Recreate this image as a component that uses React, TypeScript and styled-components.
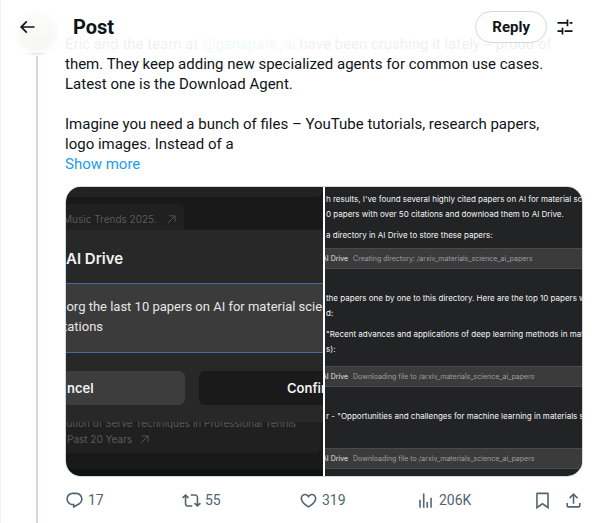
import React from "react";
import styled, { createGlobalStyle } from "styled-components";

const GlobalStyle = createGlobalStyle`
  * { box-sizing: border-box; }
  body {
    margin: 0;
    background: #fff;
    color: #0f1419;
    font-family: Roboto, "Liberation Sans", sans-serif;
    font-size: 15px;
    line-height: 20px;
  }
  button { font: inherit; color: inherit; background: none; border: 0; padding: 0; cursor: pointer; }
`;

const Column = styled.main`
  position: relative;
  border-left: 1px solid #eff3f4;
`;

const Header = styled.header`
  position: absolute;
  inset: 0 0 auto 0;
  z-index: 2;
  height: 53px;
  display: flex;
  align-items: center;
  gap: 8px;
  padding: 0 24px 0 16px;
  background: linear-gradient(rgba(255, 255, 255, 0.97) 30%, rgba(255, 255, 255, 0.92));
`;

const Title = styled.h1`
  flex: 1;
  margin: 0 0 0 28px;
  font-size: 20px;
  line-height: 24px;
  font-weight: 700;
`;

const IconButton = styled.button`
  display: flex;
`;

const ReplyButton = styled.button`
  height: 32px;
  padding: 0 16px;
  border: 1px solid #cfd9de;
  border-radius: 16px;
  background: #fff;
  font-size: 15px;
  font-weight: 700;
`;

const Article = styled.article`
  display: flex;
  gap: 8px;
  min-height: 100vh;
  padding: 12px 16px 0;
`;

const Rail = styled.div`
  flex: none;
  width: 40px;
  display: flex;
  flex-direction: column;
  align-items: center;
  gap: 4px;
`;

const Avatar = styled.div`
  width: 40px;
  height: 40px;
  border-radius: 50%;
  background: #8f857a;
  filter: blur(2px);
`;

const Thread = styled.div`
  flex: 1;
  width: 2px;
  background: #cfd9de;
`;

const Body = styled.div`
  flex: 1;
  min-width: 0;
  padding-top: 22px;
`;

const Text = styled.p`
  margin: 0 0 20px;
  &:last-of-type { margin: 0; }
`;

const Link = styled.a`
  color: #1d9bf0;
  text-decoration: none;
`;

const Media = styled.div`
  display: grid;
  grid-template-columns: 1fr 1fr;
  gap: 2px;
  margin-top: 12px;
  border: 1px solid #cfd9de;
  border-radius: 16px;
  overflow: hidden;
  font-family: Inter, sans-serif;
  white-space: nowrap;
`;

const Shot = styled.div`
  display: flex;
  flex-direction: column;
  min-width: 0;
  overflow: hidden;
  background: #191919;
`;

const TopStrip = styled.div`
  height: 10px;
  margin-bottom: 7px;
  background: #222;
  border-radius: 0 0 8px 0;
`;

const Chip = styled.div`
  display: flex;
  align-items: center;
  align-self: flex-start;
  gap: 10px;
  height: 26px;
  padding: 4px 8px 0 0;
  border-radius: 0 6px 0 0;
  background: #202020;
  color: #5a5a5a;
  font-size: 10px;
`;

const Dialog = styled.div`
  background: #282828;
  color: #f2f2f2;
`;

const DialogTitle = styled.div`
  height: 53px;
  padding-top: 19px;
  font-size: 15px;
  font-weight: 600;
`;

const Prompt = styled.div`
  height: 70px;
  padding-top: 13px;
  border: solid #4a6a9f;
  border-width: 1px 0;
  background: #3b3b3b;
  color: #e6e6e6;
  font-family: Roboto, sans-serif;
  font-size: 13px;
  line-height: 20px;
`;

const DialogButtons = styled.div`
  display: grid;
  grid-template-columns: 119px 1fr;
  gap: 14px;
  padding: 18px 0 17px;
`;

const DialogButton = styled.div<{ $primary?: boolean }>`
  height: 34px;
  padding-left: ${(p) => (p.$primary ? 88 : 1)}px;
  border-radius: ${(p) => (p.$primary ? "6px 0 0 6px" : "0 6px 6px 0")};
  background: ${(p) => (p.$primary ? "#1a1a1a" : "#3d3d3d")};
  font-size: 13px;
  font-weight: 600;
  line-height: 34px;
`;

const Suggestion = styled.div`
  display: flex;
  flex-direction: column;
  justify-content: flex-end;
  height: 31px;
  margin-right: 2px;
  padding-bottom: 6px;
  overflow: hidden;
  border-radius: 0 0 6px 0;
  background: #202020;
  color: #5a5a5a;
  font-size: 10px;
  line-height: 16px;
`;

const SuggestionLine = styled.div`
  display: flex;
  align-items: center;
  gap: 8px;
  flex: none;
  padding-left: 1px;
`;

const Footer = styled.div`
  margin-top: auto;
  height: 7px;
  background: #111212;
`;

const Cut = styled.span`
  margin-left: -3px;
`;

const Chat = styled(Shot)`
  padding: 5px 0 7px;
  background: #222325;
`;

const ChatText = styled.div<{ $after: number }>`
  padding-left: 1px;
  margin-bottom: ${(p) => p.$after}px;
  color: #f4f4f4;
  font-size: 8px;
  line-height: 15px;
`;

const ToolBar = styled.div<{ $after: number }>`
  display: flex;
  align-items: center;
  gap: 5px;
  height: 21px;
  margin-bottom: ${(p) => p.$after}px;
  border: solid #4a4a4b;
  border-width: 1px 0;
  background: #3b3b3c;
  color: #e4e4e4;
  font-size: 7px;
`;

const Muted = styled.span`
  color: #9d9da0;
`;

const Actions = styled.div`
  display: flex;
  align-items: center;
  margin-top: 13px;
  color: #536471;
  font-size: 14px;
`;

const Action = styled.button`
  flex: 1;
  display: flex;
  align-items: center;
  gap: 4px;
`;

const EndActions = styled.div`
  display: flex;
  gap: 12px;
`;

const Glyph = styled.svg`
  display: block;
  fill: currentColor;
`;

const paths = {
  back: "M7.414 13l5.043 5.04-1.414 1.42L3.586 12l7.457-7.46 1.414 1.42L7.414 11H21v2H7.414z",
  sort: "M14 6V3h2v8h-2V8H3V6h11zm7 2h-3.5V6H21v2zM8 16v-3h2v8H8v-3H3v-2h5zm13 2h-9.5v-2H21v2z",
  reply:
    "M1.751 10c0-4.42 3.584-8 8.005-8h4.366c4.49 0 8.129 3.64 8.129 8.13 0 2.96-1.607 5.68-4.196 7.11l-8.054 4.46v-3.69h-.067c-4.49.1-8.183-3.51-8.183-8.01zm8.005-6c-3.317 0-6.005 2.69-6.005 6 0 3.37 2.77 6.08 6.138 6.01l.351-.01h1.761v2.3l5.087-2.81c1.951-1.08 3.163-3.13 3.163-5.36 0-3.39-2.744-6.13-6.129-6.13H9.756z",
  repost:
    "M4.5 3.88l4.432 4.14-1.364 1.46L5.5 7.55V16c0 1.1.896 2 2 2H13v2H7.5c-2.209 0-4-1.79-4-4V7.55L1.432 9.48.068 8.02 4.5 3.88zM16.5 6H11V4h5.5c2.209 0 4 1.79 4 4v8.45l2.068-1.93 1.364 1.46-4.432 4.14-4.432-4.14 1.364-1.46 2.068 1.93V8c0-1.1-.896-2-2-2z",
  like: "M16.697 5.5c-1.222-.06-2.679.51-3.89 2.16l-.805 1.09-.806-1.09C9.984 6.01 8.526 5.44 7.304 5.5c-1.243.07-2.349.78-2.91 1.91-.552 1.12-.633 2.78.479 4.82 1.074 1.97 3.257 4.27 7.129 6.61 3.87-2.34 6.052-4.64 7.126-6.61 1.111-2.04 1.03-3.7.477-4.82-.561-1.13-1.666-1.84-2.908-1.91zm4.187 7.69c-1.351 2.48-4.001 5.12-8.379 7.67l-.503.3-.504-.3c-4.379-2.55-7.029-5.19-8.382-7.67-1.36-2.5-1.41-4.86-.514-6.67.887-1.79 2.647-2.91 4.601-3.01 1.651-.09 3.368.56 4.798 2.01 1.429-1.45 3.146-2.1 4.796-2.01 1.954.1 3.714 1.22 4.601 3.01.896 1.81.846 4.17-.514 6.67z",
  views: "M8.75 21V3h2v18h-2zM18 21V8.5h2V21h-2zM4 21l.004-10h2L6 21H4zm9.248 0v-7h2v7h-2z",
  bookmark:
    "M4 3.5C4 2.67 4.67 2 5.5 2h13c.83 0 1.5.67 1.5 1.5v19.44l-8-5.71-8 5.71V3.500zM6 4v15.060l6-4.290 6 4.290V4H6z",
  share:
    "M12 2.59l5.7 5.7-1.41 1.42L13 6.41V16h-2V6.41l-3.3 3.3-1.41-1.42L12 2.59zM21 15l-.02 3.51c0 1.38-1.12 2.49-2.5 2.49H5.5C4.11 21 3 19.88 3 18.5V15h2v3.5c0 .28.22.5.5.5h12.98c.28 0 .5-.22.5-.5L19 15h2z",
};

function Icon({ name, size = 19 }: { name: keyof typeof paths; size?: number }) {
  return (
    <Glyph width={size} height={size} viewBox="0 0 24 24" aria-hidden="true">
      <path d={paths[name]} />
    </Glyph>
  );
}

function Arrow() {
  return (
    <svg width="9" height="9" viewBox="0 0 10 10" fill="none" stroke="currentColor" aria-hidden="true">
      <path d="M1 9 9 1M2.500 1H9V7.500" />
    </svg>
  );
}

function DialogShot() {
  return (
    <Shot>
      <TopStrip />
      <Chip>
        <Cut>Music Trends 2025.</Cut>
        <Arrow />
      </Chip>
      <Dialog>
        <DialogTitle>AI Drive</DialogTitle>
        <Prompt>
          <div><Cut>.org the last 10 papers on AI for material science</Cut></div>
          <div><Cut>tations</Cut></div>
        </Prompt>
        <DialogButtons>
          <DialogButton>ncel</DialogButton>
          <DialogButton $primary>Confirm</DialogButton>
        </DialogButtons>
      </Dialog>
      <Suggestion>
        <SuggestionLine><Cut>lution of Serve Techniques in Professional Tennis</Cut></SuggestionLine>
        <SuggestionLine>
          <span>Past 20 Years</span>
          <Arrow />
        </SuggestionLine>
      </Suggestion>
      <Footer />
    </Shot>
  );
}

function ToolCall({ after, children }: { after: number; children: React.ReactNode }) {
  return (
    <ToolBar $after={after}>
      <Cut>AI Drive</Cut>
      <Muted>{children}</Muted>
    </ToolBar>
  );
}

function ChatShot() {
  return (
    <Chat>
      <ChatText $after={6}>
        h results, I've found several highly cited papers on AI for material science
        <br />0 papers with over 50 citations and download them to AI Drive.
      </ChatText>
      <ChatText $after={5}>a directory in AI Drive to store these papers:</ChatText>
      <ToolCall after={22}>Creating directory: /arxiv_materials_science_ai_papers</ToolCall>
      <ChatText $after={6}>
        the papers one by one to this directory. Here are the top 10 papers with
        <br />d:
      </ChatText>
      <ChatText $after={9}>
        "Recent advances and applications of deep learning methods in materials
        <br />s):
      </ChatText>
      <ToolCall after={22}>Downloading file to /arxiv_materials_science_ai_papers</ToolCall>
      <ChatText $after={24}>r - "Opportunities and challenges for machine learning in materials science</ChatText>
      <ToolCall after={0}>Downloading file to /arxiv_materials_science_ai_papers</ToolCall>
    </Chat>
  );
}

export default function App() {
  return (
    <>
      <GlobalStyle />
      <Column>
        <Header>
          <IconButton aria-label="Back"><Icon name="back" size={20} /></IconButton>
          <Title>Post</Title>
          <ReplyButton>Reply</ReplyButton>
          <IconButton aria-label="Sort replies"><Icon name="sort" size={20} /></IconButton>
        </Header>
        <Article>
          <Rail>
            <Avatar />
            <Thread />
          </Rail>
          <Body>
            <Text>
              Eric and the team at <Link href="#genspark">@genspark_ai</Link> have been crushing it lately -- proud of
              <br />
              them. They keep adding new specialized agents for common use cases.
              <br />
              Latest one is the Download Agent.
            </Text>
            <Text>
              Imagine you need a bunch of files – YouTube tutorials, research papers,
              <br />
              logo images. Instead of a
            </Text>
            <Link href="#more">Show more</Link>
            <Media>
              <DialogShot />
              <ChatShot />
            </Media>
            <Actions>
              <Action aria-label="17 replies"><Icon name="reply" />17</Action>
              <Action aria-label="55 reposts"><Icon name="repost" />55</Action>
              <Action aria-label="319 likes"><Icon name="like" />319</Action>
              <Action aria-label="206K views"><Icon name="views" />206K</Action>
              <EndActions>
                <IconButton aria-label="Bookmark"><Icon name="bookmark" /></IconButton>
                <IconButton aria-label="Share"><Icon name="share" /></IconButton>
              </EndActions>
            </Actions>
          </Body>
        </Article>
      </Column>
    </>
  );
}
